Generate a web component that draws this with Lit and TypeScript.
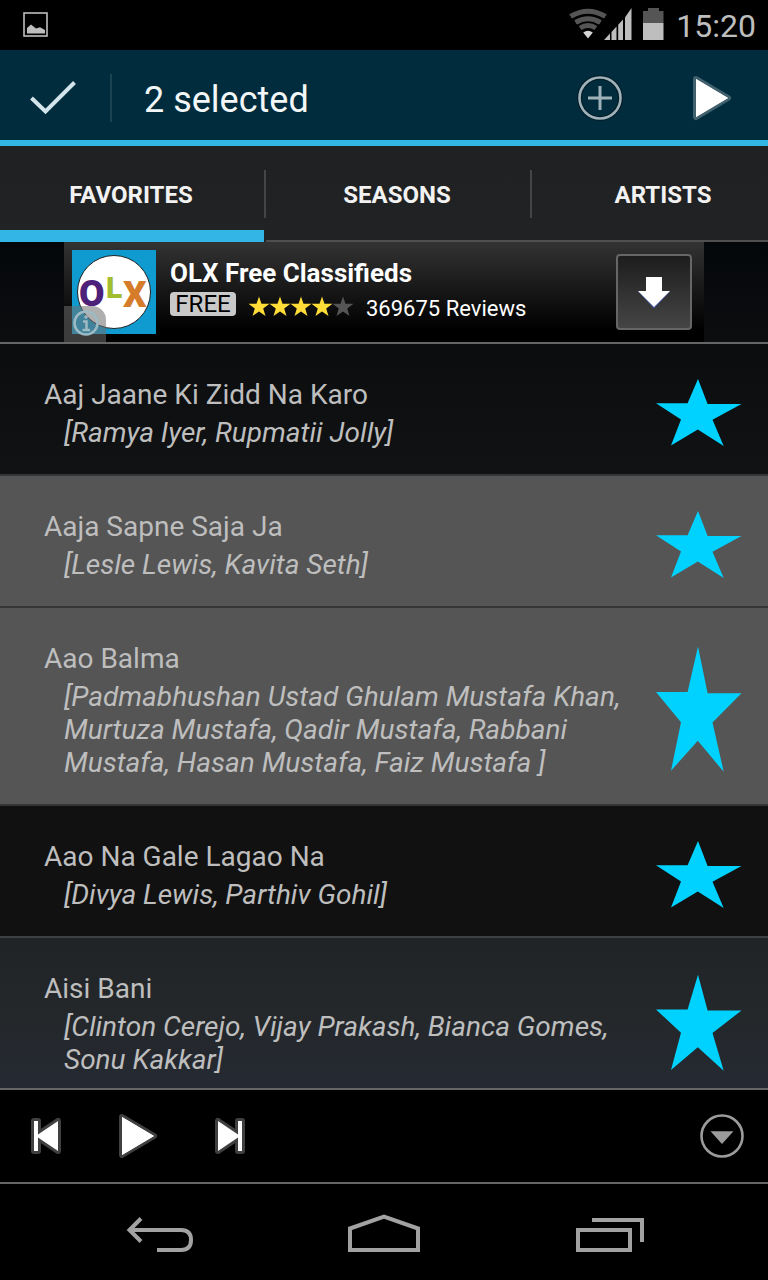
import { LitElement, html, svg, css } from "lit";
import { customElement, property, state } from "lit/decorators.js";
import { classMap } from "lit/directives/class-map.js";

interface Song {
  title: string;
  artists: string;
  tone: "night" | "selected" | "plain" | "pressed";
}

const SONGS: Song[] = [
  { title: "Aaj Jaane Ki Zidd Na Karo", artists: "[Ramya Iyer, Rupmatii Jolly]", tone: "night" },
  { title: "Aaja Sapne Saja Ja", artists: "[Lesle Lewis, Kavita Seth]", tone: "selected" },
  {
    title: "Aao Balma",
    artists:
      "[Padmabhushan Ustad Ghulam Mustafa Khan, Murtuza Mustafa, Qadir Mustafa, Rabbani Mustafa, Hasan Mustafa, Faiz Mustafa ]",
    tone: "selected",
  },
  { title: "Aao Na Gale Lagao Na", artists: "[Divya Lewis, Parthiv Gohil]", tone: "plain" },
  { title: "Aisi Bani", artists: "[Clinton Cerejo, Vijay Prakash, Bianca Gomes, Sonu Kakkar]", tone: "pressed" },
];

const TABS = ["FAVORITES", "SEASONS", "ARTISTS"];

const resets = css`
  :host,
  * {
    box-sizing: border-box;
  }
  button {
    margin: 0;
    padding: 0;
    border: 0;
    background: none;
    color: inherit;
    font: inherit;
    display: flex;
    align-items: center;
    justify-content: center;
    cursor: pointer;
  }
  svg {
    display: block;
  }
`;

const playIcon = html`
  <svg width="44" height="48" viewBox="0 0 44 48" aria-hidden="true">
    <path d="M6 5 38 24 6 43Z" fill="#fff" stroke="#fff" stroke-opacity=".25" stroke-width="6" stroke-linejoin="round" />
    <path d="M6 5 38 24 6 43Z" fill="#fff" />
  </svg>
`;

@customElement("status-bar")
class StatusBar extends LitElement {
  static styles = [
    resets,
    css`
      :host {
        display: flex;
        align-items: center;
        height: 50px;
        padding: 0 12px 0 22px;
        background: #000;
        color: #bebebe;
        flex: none;
      }
      .signals {
        margin-left: auto;
      }
      .clock {
        margin-left: 10px;
        font-size: 32px;
        line-height: 50px;
        padding-top: 2px;
      }
    `,
  ];

  render() {
    return html`
      <svg width="28" height="28" viewBox="0 0 28 28" role="img" aria-label="Screenshot saved">
        <rect x="2" y="2" width="23" height="23" fill="none" stroke="#bebebe" stroke-width="1.6" />
        <path d="M5 22.500V17L9 13.500 14 17.500 18 16.200 23 19V22.500Z" fill="#bebebe" />
      </svg>
      <svg class="signals" width="98" height="34" viewBox="0 0 98 34" role="img" aria-label="Wi-Fi, signal full, battery half">
        <g fill="none" stroke="#555" stroke-width="5">
          <path d="M2.500 8.500Q20 -2 37.500 8.500" />
          <path d="M7.500 14.500Q20 7 32.500 14.500" />
          <path d="M12 20Q20 15 28 20" />
        </g>
        <path d="M1 7.500 20 31 39 7.500" fill="none" stroke="#000" stroke-width="1" />
        <path d="M15.200 24.500Q20 21 24.800 24.500L20 30.500Z" fill="#d4d4d4" />
        <g fill="#bebebe">
          <path d="M36 32 42 25.500V32Z" />
          <path d="M43.500 32V24L48.500 18.500V32Z" />
          <path d="M50.200 32V16.700L55 11.500V32Z" />
          <path d="M57 32V9.500L63.500 0V32Z" />
          <path d="M75 15H95.500V32H75Z" />
        </g>
        <path d="M75 15V3H80V0H91V3H95.500V15Z" fill="#555" />
      </svg>
      <time class="clock">15:20</time>
    `;
  }
}

@customElement("selection-bar")
class SelectionBar extends LitElement {
  @property({ type: Number }) count = 0;

  static styles = [
    resets,
    css`
      :host {
        display: flex;
        align-items: center;
        height: 96px;
        border-bottom: 6px solid #33b5e5;
        background: #002c3d;
        color: #f3f7f8;
        flex: none;
      }
      .done {
        width: 112px;
        height: 48px;
        margin-top: 6px;
        border-right: 2px solid #1c4351;
        padding-right: 4px;
      }
      h1 {
        flex: 1;
        margin: 0;
        padding: 10px 0 0 32px;
        font-size: 36px;
        font-weight: 400;
        line-height: 42px;
      }
      .action {
        width: 112px;
        height: 90px;
        padding-top: 6px;
      }
    `,
  ];

  render() {
    return html`
      <button class="done" aria-label="Done">
        <svg width="48" height="36" viewBox="0 0 48 36" aria-hidden="true">
          <path d="M2.500 18 16.500 31.500 45.500 2.500" fill="none" stroke="#d3e4ea" stroke-width="4" />
        </svg>
      </button>
      <h1>${this.count} selected</h1>
      <button class="action" aria-label="Add to playlist">
        <svg width="48" height="48" viewBox="0 0 48 48" aria-hidden="true">
          <circle cx="24" cy="24" r="20.500" fill="none" stroke="#021d28" stroke-width="5" />
          <circle cx="24" cy="24" r="20.500" fill="none" stroke="#9fb2b9" stroke-width="2.600" />
          <path d="M24 12V36M12 24H36" stroke="#9fb2b9" stroke-width="3" />
        </svg>
      </button>
      <button class="action" aria-label="Play selection">${playIcon}</button>
    `;
  }
}

@customElement("tab-strip")
class TabStrip extends LitElement {
  @state() private active = 0;

  static styles = [
    resets,
    css`
      :host {
        display: block;
        flex: none;
        overflow: hidden;
        background: linear-gradient(#1f2022, #222325);
      }
      .strip {
        display: flex;
        height: 96px;
      }
      .tab {
        flex: 1 0 266px;
        height: 96px;
        border-bottom: 2px solid #4f4f4f;
        color: #f2f2f2;
        font-size: 24px;
        font-weight: 700;
        background: linear-gradient(#444547, #444547) right 24px / 2px 48px no-repeat;
        padding-top: 4px;
      }
      .active {
        background:
          linear-gradient(#444547, #444547) right 24px / 2px 48px no-repeat,
          linear-gradient(#33b5e5, #33b5e5) left bottom / calc(100% - 2px) 12px no-repeat;
        background-origin: border-box;
        border-color: transparent;
      }
      .label {
        padding-right: 4px;
      }
    `,
  ];

  render() {
    return html`
      <div class="strip" role="tablist">
        ${TABS.map(
          (name, i) => html`
            <button
              role="tab"
              class=${classMap({ tab: true, active: i === this.active })}
              aria-selected=${i === this.active ? "true" : "false"}
              @click=${() => (this.active = i)}
            >
              <span class="label">${name}</span>
            </button>
          `
        )}
      </div>
    `;
  }
}

@customElement("ad-banner")
class AdBanner extends LitElement {
  static styles = [
    resets,
    css`
      :host {
        display: flex;
        justify-content: center;
        border-bottom: 2px solid #666;
        background: linear-gradient(#04070a, #0c0d0f);
        flex: none;
      }
      .ad {
        position: relative;
        display: flex;
        align-items: center;
        gap: 14px;
        width: 100%;
        max-width: 640px;
        height: 100px;
        padding: 0 12px 0 8px;
        background: linear-gradient(#333, #000 88%);
        color: #fff;
      }
      .copy {
        flex: 1;
        display: flex;
        flex-direction: column;
        gap: 5px;
      }
      .name {
        font-size: 26px;
        font-weight: 700;
        line-height: 28px;
      }
      .meta {
        display: flex;
        align-items: flex-start;
        height: 33px;
      }
      .free {
        width: 66px;
        border-radius: 4px;
        background: #c9c9c9;
        color: #000;
        font-size: 24px;
        line-height: 24px;
        text-align: center;
      }
      .stars {
        margin: 4px 12px 0;
      }
      .reviews {
        font-size: 22px;
        line-height: 33px;
      }
      .install {
        width: 76px;
        height: 76px;
        border: 2px solid #666;
        border-radius: 4px;
        background: linear-gradient(#1d1d1d, #454545);
      }
      .info {
        position: absolute;
        left: 0;
        bottom: 0;
        width: 42px;
        height: 36px;
        border-radius: 0 14px 0 0;
        background: rgba(110, 110, 110, 0.55);
      }
    `,
  ];

  render() {
    const star = "M0 -10.500 2.500 -3.300 10.500 -3.300 4.200 1.400 6.500 9 0 4.400 -6.500 9 -4.200 1.400 -10.500 -3.300 -2.500 -3.300Z";
    return html`
      <div class="ad">
        <svg width="84" height="84" viewBox="0 0 84 84" role="img" aria-label="OLX logo">
          <rect width="84" height="84" fill="#0f9bd0" />
          <circle cx="42" cy="42" r="36.500" fill="#fff" stroke="#222" stroke-width="1" />
          <g font-family="Roboto, sans-serif" font-weight="900">
            <text x="7" y="56" font-size="37" fill="#4d217a">O</text>
            <text x="34" y="48" font-size="30" fill="#a3bd31">L</text>
            <text x="51" y="57" font-size="37" fill="#d57c2b">X</text>
          </g>
        </svg>
        <div class="copy">
          <div class="name">OLX Free Classifieds</div>
          <div class="meta">
            <span class="free">FREE</span>
            <svg class="stars" width="106" height="22" viewBox="0 0 106 22" role="img" aria-label="4 of 5 stars">
              ${[0, 1, 2, 3, 4].map(
                (i) => svg`<path d=${star} transform=${`translate(${11 + i * 21} 11)`} fill=${i < 4 ? "#ffdc37" : "#555"} />`
              )}
            </svg>
            <span class="reviews">369675 Reviews</span>
          </div>
        </div>
        <button class="install" aria-label="Install">
          <svg width="36" height="36" viewBox="0 0 36 36" aria-hidden="true">
            <path d="M10 3H26V17.500H34L18 34.500 2 17.500H10Z" fill="#3f55a5" />
            <path d="M10 3H26V17H34L18 33 2 17H10Z" fill="#fff" />
          </svg>
        </button>
        <button class="info" aria-label="About this ad">
          <svg width="28" height="28" viewBox="0 0 28 28" aria-hidden="true">
            <g fill="none" stroke="#9dbac5" stroke-width="2.500">
              <circle cx="15" cy="13" r="11.500" />
              <path d="M12 11.500H15.500V20M11.500 20H19" />
            </g>
            <circle cx="15" cy="7" r="1.800" fill="#9dbac5" />
          </svg>
        </button>
      </div>
    `;
  }
}

@customElement("song-row")
class SongRow extends LitElement {
  @property({ attribute: false }) song!: Song;

  static styles = [
    resets,
    css`
      :host {
        display: block;
      }
      .row {
        display: flex;
        align-items: stretch;
        border-bottom: 2px solid #333536;
        color: #bebebe;
        font-size: 28px;
        line-height: 33px;
      }
      .night {
        background: linear-gradient(#0c0d0f, #101214);
      }
      .selected {
        background: #555;
      }
      .plain {
        background: #111;
        border-color: #3e4042;
      }
      .pressed {
        background: linear-gradient(#212427, #24282b 50%, #252933);
      }
      .text {
        flex: 1;
        padding: 34px 0 25px 44px;
      }
      .title {
        margin-bottom: 5px;
      }
      .artists {
        padding-left: 20px;
        font-style: italic;
      }
      .favorite {
        flex: none;
        position: relative;
        width: 96px;
        margin: 31px 22px 23px 0;
      }
      .shape {
        position: absolute;
        inset: 0;
        width: 100%;
        height: 100%;
      }
    `,
  ];

  render() {
    return html`
      <div class="row ${this.song.tone}">
        <div class="text">
          <div class="title">${this.song.title}</div>
          <div class="artists">${this.song.artists}</div>
        </div>
        <button class="favorite" aria-label="Favorite ${this.song.title}" aria-pressed="true">
          <svg class="shape" viewBox="0 0 96 76" preserveAspectRatio="none" aria-hidden="true">
            <path
              d="M48 4 57.600 29 91.500 29 62.500 44.700 73.700 71 47.800 54.500 21 70.500 31 44.500 6 28.300 37.600 28.300Z"
              fill="#00d2ff"
            />
          </svg>
        </button>
      </div>
    `;
  }
}

@customElement("player-bar")
class PlayerBar extends LitElement {
  static styles = [
    resets,
    css`
      :host {
        display: flex;
        height: 96px;
        border-top: 2px solid #666;
        border-bottom: 2px solid #666;
        background: #000;
        flex: none;
      }
      button {
        width: 92px;
      }
      .expand {
        margin-left: auto;
      }
    `,
  ];

  private skip(flip: boolean) {
    const shape = "M4 7H8V20.500L28 7V37L8 23.500V37H4Z";
    return html`
      <svg width="32" height="44" viewBox="0 0 32 44" aria-hidden="true">
        <g transform=${flip ? "translate(32 0) scale(-1 1)" : ""}>
          <path d=${shape} fill="#404040" stroke="#404040" stroke-width="6" stroke-linejoin="round" />
          <path d=${shape} fill="#fff" />
        </g>
      </svg>
    `;
  }

  render() {
    return html`
      <button aria-label="Previous">${this.skip(false)}</button>
      <button aria-label="Play">${playIcon}</button>
      <button aria-label="Next">${this.skip(true)}</button>
      <button class="expand" aria-label="Show player">
        <svg width="44" height="44" viewBox="0 0 44 44" aria-hidden="true">
          <circle cx="22" cy="22" r="20.500" fill="none" stroke="#9b9b9b" stroke-width="2.600" />
          <path d="M10.500 17.300H33.500L22 30Z" fill="#9b9b9b" />
        </svg>
      </button>
    `;
  }
}

@customElement("system-nav")
class SystemNav extends LitElement {
  static styles = [
    resets,
    css`
      :host {
        display: flex;
        justify-content: center;
        height: 96px;
        padding: 0 48px;
        background: #000;
        flex: none;
      }
      button {
        flex: 1;
      }
      path {
        fill: none;
        stroke: #a2a2a2;
        stroke-width: 4;
      }
    `,
  ];

  render() {
    return html`
      <button aria-label="Back">
        <svg width="72" height="48" viewBox="0 0 72 48" aria-hidden="true">
          <path d="M17 10.500 5.500 22 17 33.500M6 22H57Q67 22 67 32T57 42H33" />
        </svg>
      </button>
      <button aria-label="Home">
        <svg width="72" height="48" viewBox="0 0 72 48" aria-hidden="true">
          <path d="M2 42V20.500L36 8.500 70 20.500V42Z" />
        </svg>
      </button>
      <button aria-label="Recent apps">
        <svg width="72" height="48" viewBox="0 0 72 48" aria-hidden="true">
          <path d="M6 22H58V42H6ZM20 12H70V34" />
        </svg>
      </button>
    `;
  }
}

@customElement("app-root")
class AppRoot extends LitElement {
  static styles = css`
    :host {
      display: flex;
      flex-direction: column;
      height: 100vh;
      overflow: hidden;
      background: #0c0d0f;
      font-family: Roboto, sans-serif;
    }
    .songs {
      flex: 1;
      min-height: 0;
      margin: 0;
      padding: 0;
      list-style: none;
      overflow-y: auto;
      scrollbar-width: none;
    }
  `;

  render() {
    return html`
      <status-bar></status-bar>
      <selection-bar .count=${SONGS.filter((s) => s.tone === "selected").length}></selection-bar>
      <tab-strip></tab-strip>
      <ad-banner></ad-banner>
      <ul class="songs">
        ${SONGS.map((song) => html`<li><song-row .song=${song}></song-row></li>`)}
      </ul>
      <player-bar></player-bar>
      <system-nav></system-nav>
    `;
  }
}
